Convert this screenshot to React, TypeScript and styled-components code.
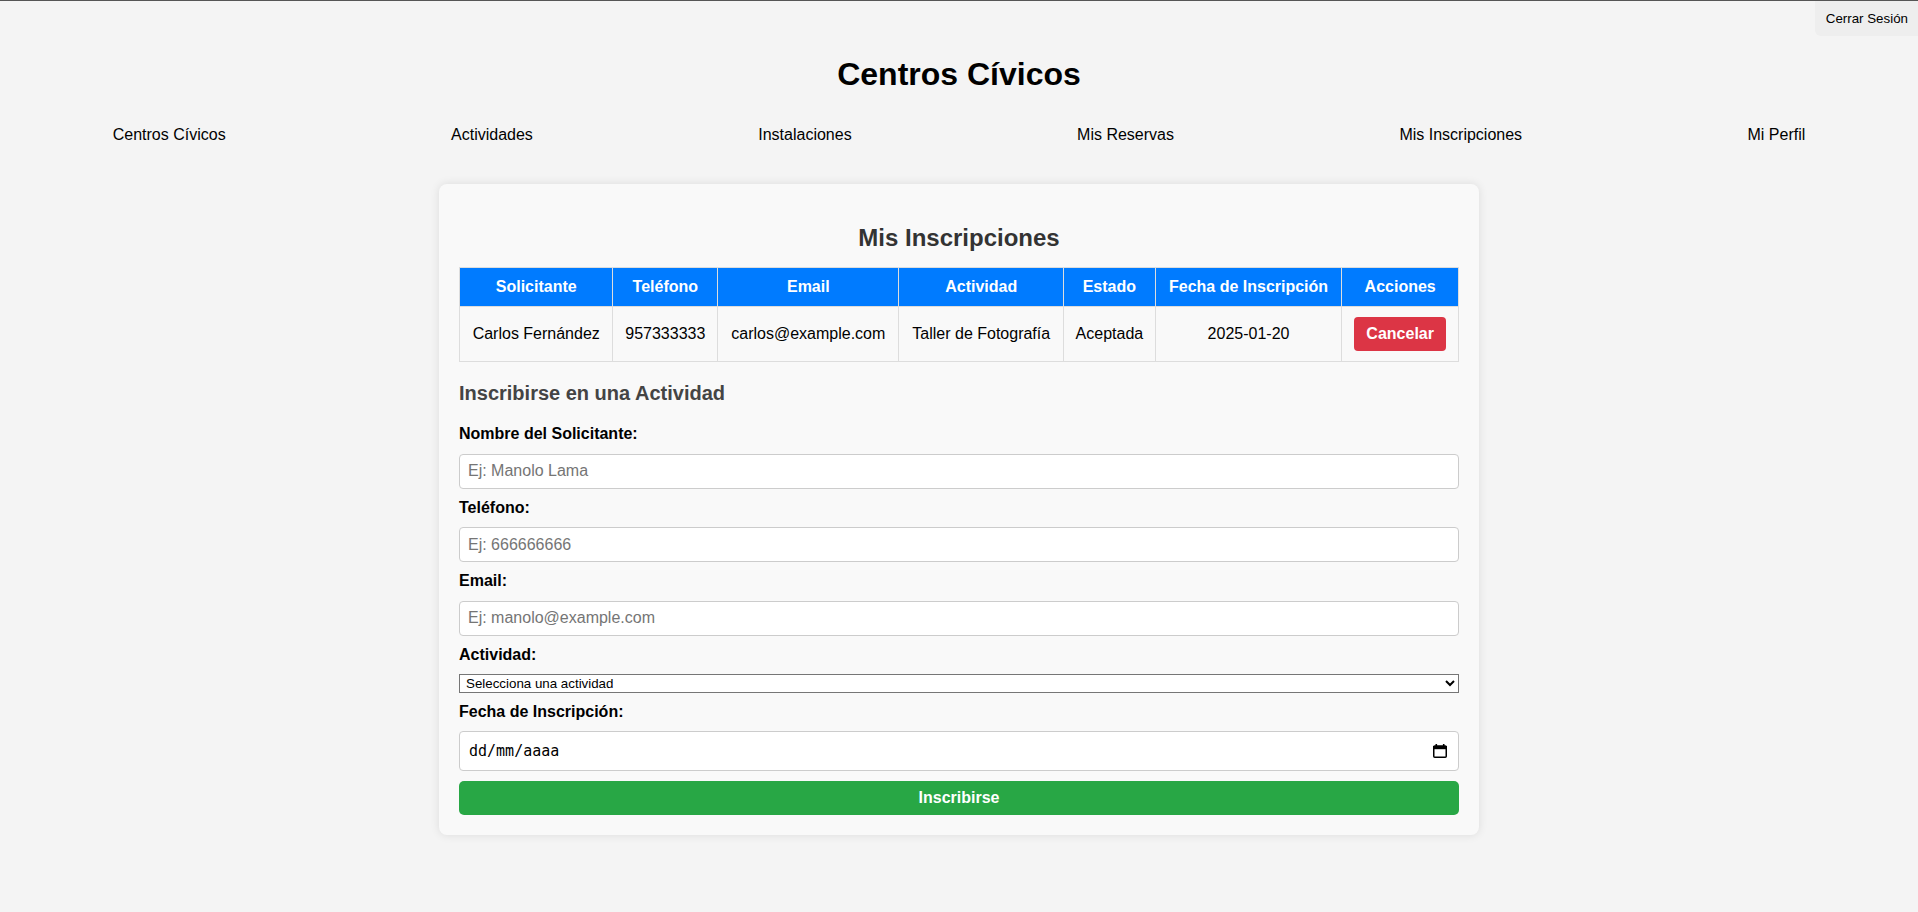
import React from "react";
import styled, { createGlobalStyle } from "styled-components";

const GlobalStyle = createGlobalStyle`
  html, body {
    margin: 0;
    padding: 0;
    background: #f4f4f4;
    font-family: "Liberation Sans", Arial, sans-serif;
    color: #000;
  }
  * { box-sizing: border-box; }
`;

const Page = styled.div`
  border-top: 1px solid #555;
  min-height: 911px;
`;

const TopBar = styled.header`
  display: flex;
  justify-content: flex-end;
  height: 35px;
`;

const LogoutButton = styled.button`
  font-family: "Liberation Sans", Arial, sans-serif;
  font-size: 13.33px;
  color: #000;
  background: #eeeeee;
  border: none;
  border-radius: 0 0 0 6px;
  padding: 0 10px 0 11px;
  height: 35px;
  cursor: pointer;
`;

const Title = styled.h1`
  margin: 20px 0 0;
  text-align: center;
  font-size: 32px;
  font-weight: bold;
`;

const Nav = styled.nav`
  display: flex;
  justify-content: space-around;
  margin-top: 33px;
`;

const NavLink = styled.a`
  color: #000;
  text-decoration: none;
  font-size: 16px;
  line-height: 18.4px;
`;

const Card = styled.main`
  width: 1040px;
  margin: 40px auto 0;
  padding: 20px;
  background: #f9f9f9;
  border-radius: 8px;
  box-shadow: 0 0 10px rgba(0, 0, 0, 0.1);
`;

const CardTitle = styled.h2`
  margin: 20px 0 15px;
  text-align: center;
  font-size: 24px;
  color: #333;
`;

const Table = styled.table`
  width: 100%;
  border-collapse: collapse;
  font-size: 16px;
`;

const Th = styled.th`
  background: #007bff;
  color: #fff;
  border: 1px solid #ddd;
  padding: 10px;
  font-weight: bold;
  text-align: center;
`;

const Td = styled.td`
  border: 1px solid #ddd;
  padding: 10px;
  text-align: center;
`;

const DangerButton = styled.button`
  font-family: "Liberation Sans", Arial, sans-serif;
  font-size: 16px;
  font-weight: bold;
  color: #fff;
  background: #dc3545;
  border: none;
  border-radius: 4px;
  padding: 8px 12px;
  cursor: pointer;
`;

const SectionTitle = styled.h3`
  margin: 20px 0 20px;
  font-size: 20px;
  color: #444;
`;

const Form = styled.form`
  display: block;
`;

const Label = styled.label`
  display: block;
  font-weight: bold;
  font-size: 16px;
  line-height: 18.4px;
  margin-bottom: 10px;
`;

const TextInput = styled.input`
  display: block;
  width: 100%;
  height: 35px;
  padding: 8px;
  margin-bottom: 10px;
  border: 1px solid #ccc;
  border-radius: 4px;
  background: #fff;
  font-family: "Liberation Sans", Arial, sans-serif;
  font-size: 16px;
  &::placeholder { color: #757575; }
`;

const Select = styled.select`
  display: block;
  width: 100%;
  height: 19px;
  margin: 0 0 10px;
  padding: 0 2px;
  font-family: "Liberation Sans", Arial, sans-serif;
  font-size: 13.33px;
  color: #000;
  background: #fff;
  border: 1px solid #767676;
  border-radius: 0;
`;

const DateField = styled.div`
  position: relative;
  margin-bottom: 10px;
`;

const DateInput = styled.input`
  display: block;
  width: 100%;
  height: 40px;
  padding: 8px 40px 8px 9px;
  border: 1px solid #ccc;
  border-radius: 4px;
  background: #fff;
  font-family: "DejaVu Sans Mono", "Liberation Mono", monospace;
  font-size: 15px;
  &::placeholder { color: #000; }
`;

const CalendarIcon = styled.svg`
  position: absolute;
  right: 12px;
  top: 13px;
  width: 14px;
  height: 14px;
  pointer-events: none;
`;

const SubmitButton = styled.button`
  display: block;
  width: 100%;
  height: 34px;
  font-family: "Liberation Sans", Arial, sans-serif;
  font-size: 16px;
  font-weight: bold;
  color: #fff;
  background: #28a745;
  border: none;
  border-radius: 5px;
  cursor: pointer;
`;

const navItems = [
  "Centros Cívicos",
  "Actividades",
  "Instalaciones",
  "Mis Reservas",
  "Mis Inscripciones",
  "Mi Perfil",
];

const headers = [
  "Solicitante",
  "Teléfono",
  "Email",
  "Actividad",
  "Estado",
  "Fecha de Inscripción",
  "Acciones",
];

const rows = [
  {
    name: "Carlos Fernández",
    phone: "957333333",
    email: "carlos@example.com",
    activity: "Taller de Fotografía",
    status: "Aceptada",
    date: "2025-01-20",
  },
];

export default function App() {
  return (
    <>
      <GlobalStyle />
      <Page>
        <TopBar>
          <LogoutButton>Cerrar Sesión</LogoutButton>
        </TopBar>
        <Title>Centros Cívicos</Title>
        <Nav>
          {navItems.map((item) => (
            <NavLink key={item} href="#">
              {item}
            </NavLink>
          ))}
        </Nav>
        <Card>
          <CardTitle>Mis Inscripciones</CardTitle>
          <Table>
            <thead>
              <tr>
                {headers.map((h) => (
                  <Th key={h}>{h}</Th>
                ))}
              </tr>
            </thead>
            <tbody>
              {rows.map((r) => (
                <tr key={r.email}>
                  <Td>{r.name}</Td>
                  <Td>{r.phone}</Td>
                  <Td>{r.email}</Td>
                  <Td>{r.activity}</Td>
                  <Td>{r.status}</Td>
                  <Td>{r.date}</Td>
                  <Td>
                    <DangerButton>Cancelar</DangerButton>
                  </Td>
                </tr>
              ))}
            </tbody>
          </Table>

          <SectionTitle>Inscribirse en una Actividad</SectionTitle>
          <Form onSubmit={(e) => e.preventDefault()}>
            <Label htmlFor="nombre">Nombre del Solicitante:</Label>
            <TextInput id="nombre" type="text" placeholder="Ej: Manolo Lama" />
            <Label htmlFor="telefono">Teléfono:</Label>
            <TextInput id="telefono" type="text" placeholder="Ej: 666666666" />
            <Label htmlFor="email">Email:</Label>
            <TextInput id="email" type="text" placeholder="Ej: manolo@example.com" />
            <Label htmlFor="actividad">Actividad:</Label>
            <Select id="actividad" defaultValue="">
              <option value="">Selecciona una actividad</option>
            </Select>
            <Label htmlFor="fecha">Fecha de Inscripción:</Label>
            <DateField>
              <DateInput id="fecha" type="text" placeholder="dd/mm/aaaa" />
              <CalendarIcon viewBox="0 0 14 14" aria-hidden="true">
                <rect x="0.75" y="2" width="12.5" height="11.25" rx="1" fill="none" stroke="#000" strokeWidth="1.5" />
                <rect x="0" y="2" width="14" height="3.2" fill="#000" />
                <rect x="2.5" y="0" width="1.6" height="3" fill="#000" />
                <rect x="9.9" y="0" width="1.6" height="3" fill="#000" />
              </CalendarIcon>
            </DateField>
            <SubmitButton type="submit">Inscribirse</SubmitButton>
          </Form>
        </Card>
      </Page>
    </>
  );
}
